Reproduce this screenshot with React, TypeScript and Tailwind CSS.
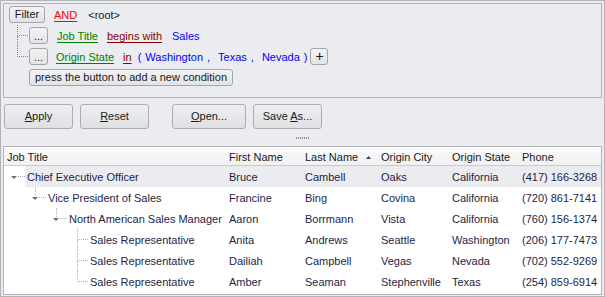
import React from "react";

const F = { fontFamily: '"Liberation Sans", Arial, sans-serif' };

function SmallBtn({ children, className = "" }: { children: React.ReactNode; className?: string }) {
  return (
    <div
      className={`h-[17px] flex items-center justify-center border border-[#a3a5ab] rounded-[3px] bg-gradient-to-b from-[#f3f3f5] to-[#e2e3e6] text-[#1a1a1a] text-[11px] leading-none ${className}`}
    >
      {children}
    </div>
  );
}

function BigBtn({ children, w }: { children: React.ReactNode; w: string }) {
  return (
    <div
      className={`${w} h-[25px] flex items-center justify-center border border-[#abadb3] rounded-[3px] bg-gradient-to-b from-[#eeeff1] to-[#dfe0e3] text-[#1a1a1a] text-[11px]`}
    >
      {children}
    </div>
  );
}

function Connector({ last }: { last?: boolean }) {
  return (
    <div className="w-[11px] h-full flex flex-col ml-[8px] mr-[1px]">
      <div className="h-[11px] border-l border-b border-dotted border-[#8a8a8a]" />
      <div className={`flex-1 ${last ? "" : "border-l border-dotted border-[#8a8a8a]"}`} />
    </div>
  );
}

type Row = {
  level: number;
  title: string;
  expand?: boolean;
  last?: boolean;
  cells: string[];
  focused?: boolean;
};

const rows: Row[] = [
  { level: 0, title: "Chief Executive Officer", expand: true, last: true, cells: ["Bruce", "Cambell", "Oaks", "California", "(417) 166-3268"], focused: true },
  { level: 1, title: "Vice President of Sales", expand: true, last: true, cells: ["Francine", "Bing", "Covina", "California", "(720) 861-7141"] },
  { level: 2, title: "North American Sales Manager", expand: true, last: true, cells: ["Aaron", "Borrmann", "Vista", "California", "(760) 156-1374"] },
  { level: 3, title: "Sales Representative", cells: ["Anita", "Andrews", "Seattle", "Washington", "(206) 177-7473"] },
  { level: 3, title: "Sales Representative", cells: ["Dailiah", "Campbell", "Vegas", "Nevada", "(702) 552-9269"] },
  { level: 3, title: "Sales Representative", last: true, cells: ["Amber", "Seaman", "Stephenville", "Texas", "(254) 859-6914"] },
];

function NodeBox({ level, expand, last }: { level: number; expand?: boolean; last?: boolean }) {
  return (
    <div className="relative w-[21px] h-full shrink-0">
      <div className="flex h-full">
        <div className="w-[10px] h-full" />
        <div className="flex-1 h-full flex flex-col">
          <div className={`h-[11px] border-b border-dotted border-[#b0b0b0] ${level > 0 ? "border-l" : ""}`} />
          <div className={`flex-1 ${level > 0 && !last ? "border-l border-dotted border-[#b0b0b0]" : ""}`} />
        </div>
      </div>
      {expand && (
        <svg className="absolute left-[6px] top-[9px]" width="8" height="5" viewBox="0 0 8 5">
          <rect x="0" y="0" width="8" height="5" fill="white" />
          <polygon points="1,1 7,1 4,4" fill="#6e6e6e" />
        </svg>
      )}
    </div>
  );
}

const T = "pt-[2px]";

export default function App() {
  return (
    <div
      style={F}
      className="w-[605px] h-[297px] border border-[#b1b3b9] bg-[#ebecef] px-[2px] pt-[2px] pb-[1px] flex flex-col text-[11px] overflow-hidden"
    >
      {/* Filter panel */}
      <div className="h-[95px] shrink-0 border border-[#b1b3b9] bg-[#ebecef] pl-[5px] flex flex-col">
        <div className="h-[21px] flex items-center">
          <SmallBtn className="w-[36px]">Filter</SmallBtn>
          <span className={`${T} ml-[9px] text-[#ff0000] underline underline-offset-[2px]`}>AND</span>
          <span className={`${T} ml-[11px] text-[#1a1a1a]`}>&lt;root&gt;</span>
        </div>
        <div className="h-[21px] flex items-center">
          <Connector />
          <SmallBtn className="w-[19px]">
            <span className="mt-[2px]">...</span>
          </SmallBtn>
          <span className={`${T} ml-[9px] text-[#008000] underline underline-offset-[2px]`}>Job Title</span>
          <span className={`${T} ml-[9px] text-[#8b0000] underline underline-offset-[2px]`}>begins with</span>
          <span className={`${T} ml-[10px] text-[#0000ff]`}>Sales</span>
        </div>
        <div className="h-[21px] flex items-center">
          <Connector last />
          <SmallBtn className="w-[19px]">
            <span className="mt-[2px]">...</span>
          </SmallBtn>
          <span className={`${T} ml-[8px] text-[#008000] underline underline-offset-[2px]`}>Origin State</span>
          <span className={`${T} ml-[9px] text-[#8b0000] underline underline-offset-[2px]`}>in</span>
          <span className={`${T} ml-[6px] text-[#0000ff]`}>(</span>
          <span className={`${T} ml-[4px] text-[#0000ff]`}>Washington</span>
          <span className={`${T} ml-[4px] text-[#0000ff]`}>,</span>
          <span className={`${T} ml-[8px] text-[#0000ff]`}>Texas</span>
          <span className={`${T} ml-[4px] text-[#0000ff]`}>,</span>
          <span className={`${T} ml-[8px] text-[#0000ff]`}>Nevada</span>
          <span className={`${T} ml-[4px] text-[#0000ff]`}>)</span>
          <SmallBtn className="w-[18px] ml-[3px] h-[16px] text-[14px]">
            <span className="-mt-[1px]">+</span>
          </SmallBtn>
        </div>
        <div className="h-[21px] flex items-center pl-[20px]">
          <SmallBtn className="w-[204px] justify-start pl-[5px]">press the button to add a new condition</SmallBtn>
        </div>
      </div>

      {/* Buttons row */}
      <div className="mt-[6px] h-[25px] shrink-0 flex items-center pl-[1px]">
        <BigBtn w="w-[69px]">
          <span><span className="underline">A</span>pply</span>
        </BigBtn>
        <div className="w-[7px]" />
        <BigBtn w="w-[69px]">
          <span><span className="underline">R</span>eset</span>
        </BigBtn>
        <div className="w-[23px]" />
        <BigBtn w="w-[74px]">
          <span><span className="underline">O</span>pen...</span>
        </BigBtn>
        <div className="w-[7px]" />
        <BigBtn w="w-[69px]">
          <span>Save <span className="underline">A</span>s...</span>
        </BigBtn>
      </div>

      {/* Splitter */}
      <div className="h-[17px] shrink-0 flex items-center justify-center">
        <div className="flex gap-[1px]">
          {Array.from({ length: 7 }).map((_, i) => (
            <div key={i} className="w-[1px] h-[2px] bg-[#8c8c8c]" />
          ))}
        </div>
      </div>

      {/* Grid */}
      <div className="flex-1 border border-[#b1b3b9] bg-white flex flex-col overflow-hidden">
        <div className="h-[19px] shrink-0 grid grid-cols-[222px_76px_76px_71px_70px_1fr] bg-gradient-to-b from-[#fafafa] to-[#f1f1f2] border-b border-[#c9cace] text-[#202020] items-center">
          <div className={`pl-[3px] ${T}`}>Job Title</div>
          <div className={`pl-[3px] ${T}`}>First Name</div>
          <div className={`pl-[3px] ${T} flex items-center`}>
            <span>Last Name</span>
            <svg className="ml-[8px]" width="5" height="3" viewBox="0 0 5 3">
              <polygon points="0,3 5,3 2.5,0" fill="#444" />
            </svg>
          </div>
          <div className={`pl-[3px] ${T}`}>Origin City</div>
          <div className={`pl-[3px] ${T}`}>Origin State</div>
          <div className={`pl-[3px] ${T}`}>Phone</div>
        </div>
        {rows.map((r, i) => (
          <div key={i} className="h-[21px] shrink-0 grid grid-cols-[222px_76px_76px_71px_70px_1fr] text-[#1e1e46]">
            <div className="flex h-full items-stretch">
              <div style={{ width: r.level * 21 }} className="shrink-0" />
              <NodeBox level={r.level} expand={r.expand} last={r.last} />
              <div className={`flex-1 flex items-center pl-[2px] ${T} ${r.focused ? "bg-[#ebecef]" : ""}`}>{r.title}</div>
            </div>
            {r.cells.map((c, j) => (
              <div key={j} className={`flex items-center pl-[3px] ${T} ${r.focused ? "bg-[#ebecef]" : ""}`}>
                {c}
              </div>
            ))}
          </div>
        ))}
      </div>
    </div>
  );
}
